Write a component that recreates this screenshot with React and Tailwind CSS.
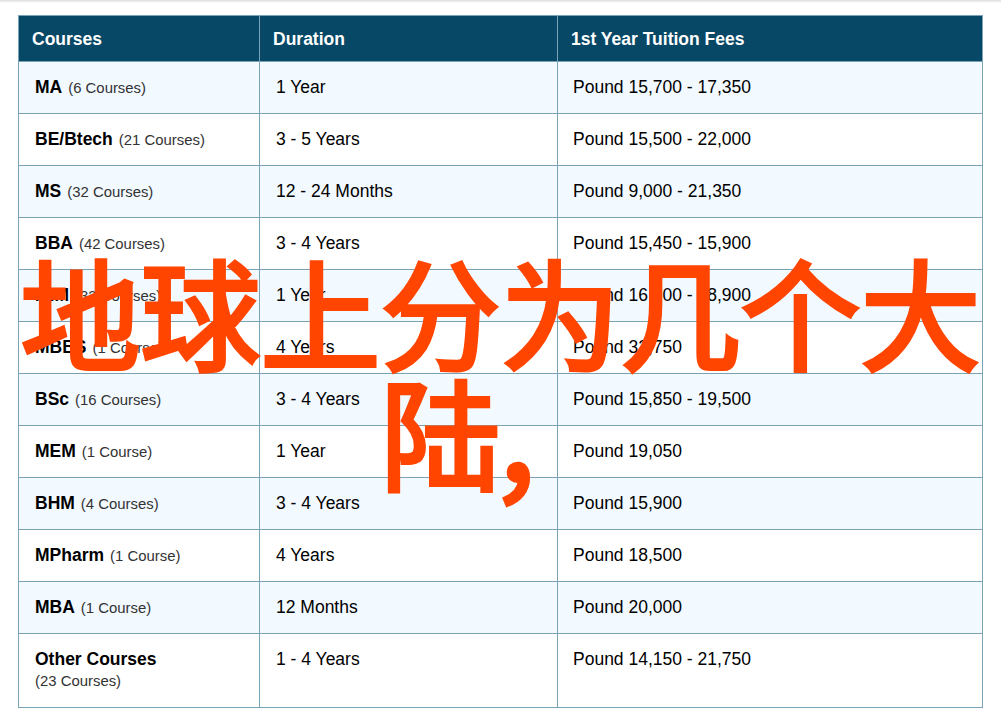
const rows = [
  ["MA", "(6 Courses)", "1 Year", "Pound 15,700 - 17,350"],
  ["BE/Btech", "(21 Courses)", "3 - 5 Years", "Pound 15,500 - 22,000"],
  ["MS", "(32 Courses)", "12 - 24 Months", "Pound 9,000 - 21,350"],
  ["BBA", "(42 Courses)", "3 - 4 Years", "Pound 15,450 - 15,900"],
  ["MIM", "(32 Courses)", "1 Year", "Pound 16,000 - 18,900"],
  ["MBBS", "(1 Course)", "4 Years", "Pound 32,750"],
  ["BSc", "(16 Courses)", "3 - 4 Years", "Pound 15,850 - 19,500"],
  ["MEM", "(1 Course)", "1 Year", "Pound 19,050"],
  ["BHM", "(4 Courses)", "3 - 4 Years", "Pound 15,900"],
  ["MPharm", "(1 Course)", "4 Years", "Pound 18,500"],
  ["MBA", "(1 Course)", "12 Months", "Pound 20,000"],
];

export default function App() {
  return (
    <div className="relative h-[720px] w-[1001px] overflow-hidden bg-white font-['Liberation_Sans',sans-serif] text-black">
      <div className="h-[3px] bg-gradient-to-b from-[#dddddd] to-white" />

      <div className="ml-[18px] mt-3 w-[965px] border border-[#7ba3b8]">
        {/* Header */}
        <div className="grid h-[45px] grid-cols-[240px_298px_1fr] bg-[#074866] text-[17.5px] font-bold text-white">
          <div className="pl-[13px] pt-[10px]">Courses</div>
          <div className="border-l border-[#7ba3b8] pl-[13px] pt-[10px]">Duration</div>
          <div className="border-l border-[#7ba3b8] pl-[13px] pt-[10px]">1st Year Tuition Fees</div>
        </div>

        {/* Rows */}
        {rows.map((row, i) => (
          <div
            key={row[0]}
            className={`grid h-[52px] grid-cols-[240px_298px_1fr] border-t border-[#7ba3b8] text-[17.5px] ${i % 2 === 0 ? "bg-[#f2f9ff]" : "bg-white"}`}
          >
            <div className="pl-[16px] pt-3">
              <span className="font-bold">{row[0]}</span>
              <span className="ml-[6px] text-[14.9px] text-[#333333]">{row[1]}</span>
            </div>
            <div className="border-l border-[#7ba3b8] pl-4 pt-3">{row[2]}</div>
            <div className="border-l border-[#7ba3b8] pl-[15px] pt-3">{row[3]}</div>
          </div>
        ))}

        <div className="grid h-[74px] grid-cols-[240px_298px_1fr] border-t border-[#7ba3b8] bg-white text-[17.5px]">
          <div className="pl-[16px] pt-3">
            <div className="font-bold">Other Courses</div>
            <div className="text-[14.9px] leading-[18px] text-[#333333]">(23 Courses)</div>
          </div>
          <div className="border-l border-[#7ba3b8] pl-4 pt-3">1 - 4 Years</div>
          <div className="border-l border-[#7ba3b8] pl-[15px] pt-3">Pound 14,150 - 21,750</div>
        </div>
      </div>

      {/* Title over the table */}
      <div className="absolute left-0 right-0 top-[250px] text-center font-['Noto_Sans_CJK_SC',sans-serif] text-[120px] font-normal leading-[120px] text-[#ff4500] [-webkit-text-stroke:4px_#ff4500]">
        地球上分为几个大陆<span className="relative -left-[12px] top-[10px]">，</span>
      </div>
    </div>
  );
}
